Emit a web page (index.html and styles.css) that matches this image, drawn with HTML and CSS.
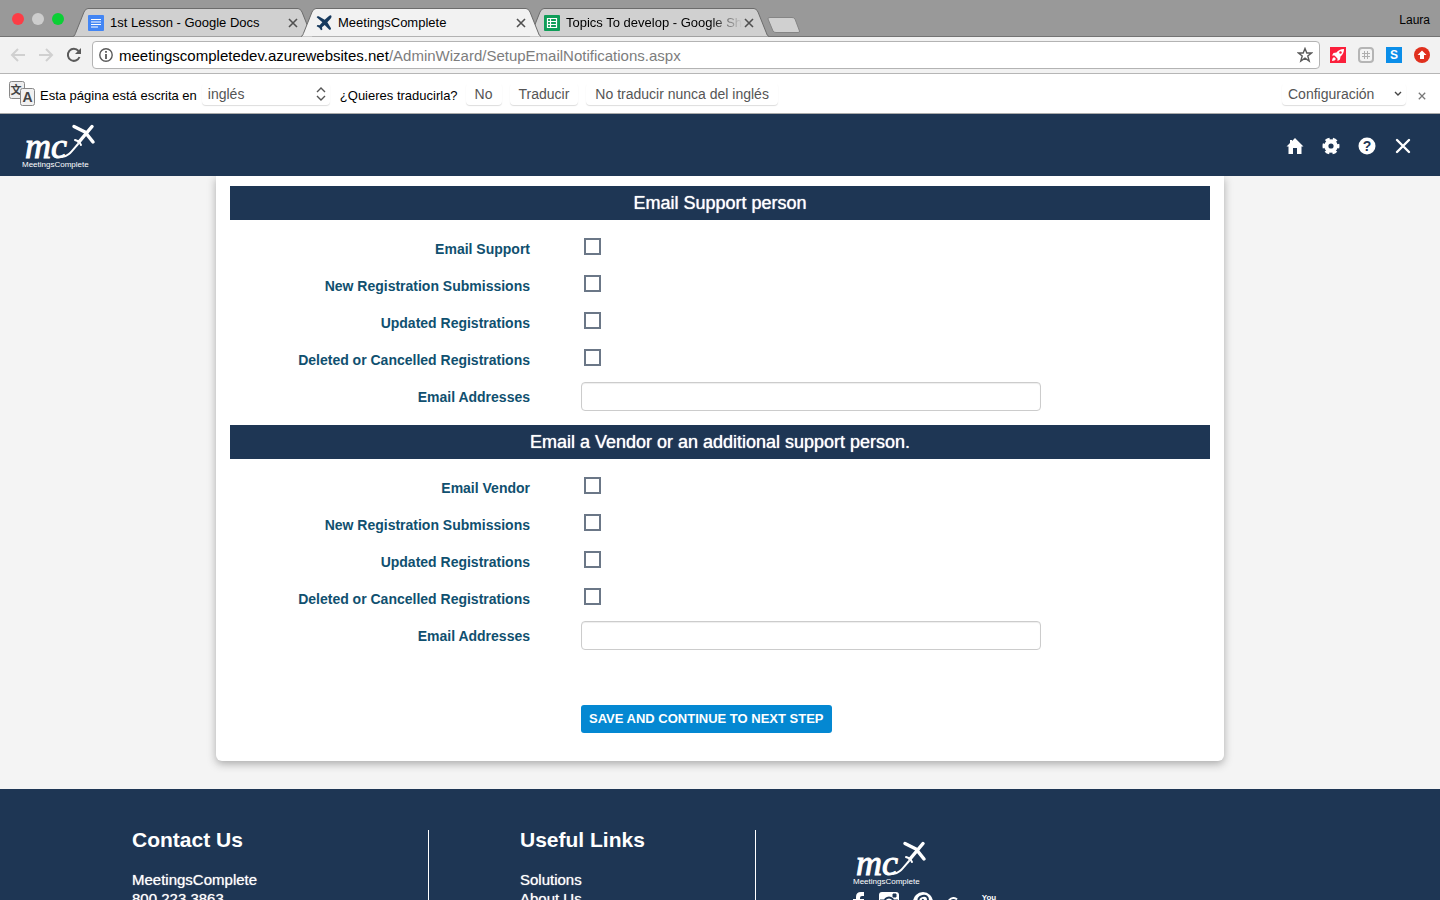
FILE: index.html
```html
<!DOCTYPE html>
<html lang="en">
<head>
<meta charset="utf-8">
<title>MeetingsComplete</title>
<link rel="stylesheet" href="styles.css">
</head>
<body>
<svg class="defs" aria-hidden="true">
  <symbol id="plane" viewBox="0 0 24 24"><path d="M1 3.500Q1.500 1 4 2L13 7 19 2Q22-1 23 1T21.500 6L17 11 22.500 20Q22.500 23 20 22L13 15 9 18.500 9.500 22 7.500 23 5 19 1 17 2 15 5.500 15.500 9.500 11Z"/></symbol>
  <symbol id="logo" viewBox="0 0 74 48">
    <text x="3" y="36" class="logo-mc">mc</text>
    <path d="M40 35C46 35 50 29 56 22" fill="none" stroke="#fff" stroke-width="2" stroke-linecap="round"/>
    <path d="M70 4.500 57 20" stroke="#fff" stroke-width="3.500" stroke-linecap="round"/>
    <path d="M52 4.500 63 10 71 20" fill="none" stroke="#fff" stroke-width="3.500" stroke-linecap="round" stroke-linejoin="round"/>
    <path d="M53 18 57 19.500 59 23" fill="none" stroke="#fff" stroke-width="2" stroke-linecap="round"/>
    <text x="0" y="45" class="logo-name">MeetingsComplete</text>
  </symbol>
  <symbol id="tabshape" viewBox="0 0 240 29" preserveAspectRatio="none"><path d="M0 28.500C2 28 2 26 3 24L11 4Q12.500.5 15 .5H225Q227.500.5 229 4L237 24Q238 28 240 28.500"/></symbol>
  <symbol id="cross" viewBox="0 0 10 10"><path d="M1 1 9 9M9 1 1 9" fill="none" stroke="currentColor" stroke-width="1.600"/></symbol>
</svg>

<header class="browser">
  <div class="tabstrip">
    <div class="lights"><span class="light red"></span><span class="light grey"></span><span class="light green"></span></div>
    <div class="tab">
      <svg class="tab-bg"><use href="#tabshape"/></svg>
      <svg class="favicon" viewBox="0 0 16 16"><rect width="16" height="16" rx="1" fill="#4285f4"/><path d="M3 4.500H13M3 7H13M3 9.500H13M3 12H10" stroke="#fff" stroke-width="1.200"/></svg>
      <span class="tab-title">1st Lesson - Google Docs</span>
      <button class="tab-close" aria-label="Close tab"><svg width="10" height="10"><use href="#cross"/></svg></button>
    </div>
    <div class="tab active">
      <svg class="tab-bg"><use href="#tabshape"/></svg>
      <svg class="favicon" fill="#173a5e"><use href="#plane"/></svg>
      <span class="tab-title">MeetingsComplete</span>
      <button class="tab-close" aria-label="Close tab"><svg width="10" height="10"><use href="#cross"/></svg></button>
    </div>
    <div class="tab last">
      <svg class="tab-bg"><use href="#tabshape"/></svg>
      <svg class="favicon" viewBox="0 0 16 16"><rect width="16" height="16" rx="1" fill="#0f9d58"/><path d="M3.500 3.500H12.500V12.500H3.500ZM3.500 6.500H12.500M3.500 9.500H12.500M6.500 3.500V12.500" fill="none" stroke="#fff" stroke-width="1.200"/></svg>
      <span class="tab-title fade">Topics To develop - Google Sheets</span>
      <button class="tab-close" aria-label="Close tab"><svg width="10" height="10"><use href="#cross"/></svg></button>
    </div>
    <button class="newtab" aria-label="New tab"><svg width="34" height="16" viewBox="0 0 34 16"><path d="M1 2Q.5.5 3 .5H25Q27 .5 28 2L32.500 14Q33 15.500 31 15.500H9Q6.500 15.500 6 14Z" fill="#d0d0d0" stroke="#858585"/></svg></button>
    <span class="profile">Laura</span>
  </div>

  <div class="toolbar">
    <button class="tool" aria-label="Back"><svg width="16" height="16" viewBox="0 0 16 16"><path d="M15 8H2M8 2 2 8 8 14" fill="none" stroke="#d0d0d0" stroke-width="2"/></svg></button>
    <button class="tool" aria-label="Forward"><svg width="16" height="16" viewBox="0 0 16 16"><path d="M1 8H14M8 2 14 8 8 14" fill="none" stroke="#d0d0d0" stroke-width="2"/></svg></button>
    <button class="tool" aria-label="Reload"><svg width="16" height="16" viewBox="0 0 16 16"><path d="M13.500 10A6 6 0 1 1 12.500 4" fill="none" stroke="#5a5a5a" stroke-width="2"/><path d="M15 1V7H9Z" fill="#5a5a5a"/></svg></button>
    <div class="address">
      <svg width="14" height="14" viewBox="0 0 14 14"><circle cx="7" cy="7" r="6.200" fill="none" stroke="#5a5a5a" stroke-width="1.400"/><path d="M7 6V11M7 3V4.800" stroke="#5a5a5a" stroke-width="1.800"/></svg>
      <span class="url">meetingscompletedev.azurewebsites.net<span class="path">/AdminWizard/SetupEmailNotifications.aspx</span></span>
      <svg width="16" height="16" viewBox="0 0 16 16"><path d="M8 1.500 9.800 6H14.500L10.800 9 12.200 14 8 11.200 3.800 14 5.200 9 1.500 6H6.200Z" fill="none" stroke="#5a5a5a" stroke-width="1.400"/></svg>
    </div>
    <div class="extensions">
      <svg width="16" height="16" viewBox="0 0 16 16"><rect width="16" height="16" fill="#fb1f3b"/><path d="M14 2Q9 2 6.500 5.500L3.500 6 2 8.500 4.500 8.500 7.500 11.500 7.500 14 10 12.500 10.500 9.500Q14 7 14 2ZM4 10Q2 11 2 14 5 14 6 12Z" fill="#fff"/><circle cx="10.500" cy="5.500" r="1.200" fill="#fb1f3b"/></svg>
      <svg width="16" height="16" viewBox="0 0 16 16"><rect x="1" y="1" width="14" height="14" rx="3" fill="#f4f4f4" stroke="#b5b5b5" stroke-width="2"/><path d="M6.500 4V12M9.500 4V12M4 6.500H12M4 9.500H12" stroke="#b0b0b0"/></svg>
      <svg width="16" height="16" viewBox="0 0 16 16"><rect width="16" height="16" fill="#0b8ee9"/><text x="8" y="12" class="ext-s">S</text></svg>
      <svg width="16" height="16" viewBox="0 0 16 16"><circle cx="8" cy="8" r="8" fill="#e0301e"/><path d="M8 3.500 12.500 8H10V12H6V8H3.500Z" fill="#fff"/></svg>
    </div>
  </div>

  <div class="infobar">
    <svg width="28" height="28" viewBox="0 0 28 28"><rect x="1.500" y="1.500" width="15" height="17" rx="2" fill="#eee" stroke="#888"/><text x="8" y="14" class="tr-cjk">文</text><rect x="12.500" y="8.500" width="14" height="17" rx="2" fill="#f1f1f1" stroke="#888"/><text x="19.500" y="22" class="tr-a">A</text></svg>
    <label class="info-text" for="lang">Esta página está escrita en</label>
    <span class="pick lang"><select id="lang"><option>inglés</option></select><svg width="10" height="14" viewBox="0 0 10 14"><path d="M1 5 5 1 9 5M1 9 5 13 9 9" fill="none" stroke="#555" stroke-width="1.400"/></svg></span>
    <span class="info-text ask">¿Quieres traducirla?</span>
    <button class="soft">No</button>
    <button class="soft">Traducir</button>
    <button class="soft">No traducir nunca del inglés</button>
    <span class="pick config"><select aria-label="Configuración"><option>Configuración</option></select><svg width="8" height="6" viewBox="0 0 8 6"><path d="M1 1 4 4 7 1" fill="none" stroke="#444" stroke-width="1.400"/></svg></span>
    <button class="dismiss" aria-label="Close"><svg width="8" height="8"><use href="#cross"/></svg></button>
  </div>
</header>

<nav class="site-nav">
  <a href="#" aria-label="MeetingsComplete"><svg class="logo"><use href="#logo"/></svg></a>
  <div class="nav-icons">
    <a href="#" aria-label="Home"><svg width="18" height="18" viewBox="0 0 18 18"><path d="M9 1 17.500 9.500H15.500V17H11V11H7V17H2.500V9.500H.5L4 6V3H6V4Z" fill="#fff"/></svg></a>
    <a href="#" aria-label="Settings"><svg width="18" height="18" viewBox="0 0 18 18"><circle cx="9" cy="9" r="4.700" fill="none" stroke="#fff" stroke-width="4.200"/><circle cx="9" cy="9" r="7" fill="none" stroke="#fff" stroke-width="3" stroke-dasharray="4.300 3.030" stroke-dashoffset="2.150"/></svg></a>
    <a href="#" aria-label="Help"><svg width="18" height="18" viewBox="0 0 18 18"><circle cx="9" cy="9" r="8.500" fill="#fff"/><text x="9" y="14" class="help-mark">?</text></svg></a>
    <a href="#" aria-label="Close"><svg width="18" height="18" viewBox="0 0 18 18"><path d="M3 3 15 15M15 3 3 15" stroke="#fff" stroke-width="2.400" stroke-linecap="round"/></svg></a>
  </div>
</nav>

<main class="page">
  <form class="card">
    <h2>Email Support person</h2>
    <div class="rows">
      <div class="row"><label for="s1">Email Support</label><input type="checkbox" id="s1"></div>
      <div class="row"><label for="s2">New Registration Submissions</label><input type="checkbox" id="s2"></div>
      <div class="row"><label for="s3">Updated Registrations</label><input type="checkbox" id="s3"></div>
      <div class="row"><label for="s4">Deleted or Cancelled Registrations</label><input type="checkbox" id="s4"></div>
      <div class="row"><label for="s5">Email Addresses</label><input type="text" id="s5"></div>
    </div>
    <h2>Email a Vendor or an additional support person.</h2>
    <div class="rows">
      <div class="row"><label for="v1">Email Vendor</label><input type="checkbox" id="v1"></div>
      <div class="row"><label for="v2">New Registration Submissions</label><input type="checkbox" id="v2"></div>
      <div class="row"><label for="v3">Updated Registrations</label><input type="checkbox" id="v3"></div>
      <div class="row"><label for="v4">Deleted or Cancelled Registrations</label><input type="checkbox" id="v4"></div>
      <div class="row"><label for="v5">Email Addresses</label><input type="text" id="v5"></div>
    </div>
    <div class="row actions"><button class="save" type="button">SAVE AND CONTINUE TO NEXT STEP</button></div>
  </form>
</main>

<footer class="site-footer">
  <section><h3>Contact Us</h3><p>MeetingsComplete<br>800.223.3863</p></section>
  <section><h3>Useful Links</h3><ul><li><a href="#">Solutions</a></li><li><a href="#">About Us</a></li></ul></section>
  <section>
    <svg class="logo"><use href="#logo"/></svg>
    <div class="social">
      <a href="#" aria-label="Facebook"><svg width="12" height="22" viewBox="0 0 12 22"><path d="M3 22V11H0V7H3V5Q3 0 8 0H11V4H9Q7 4 7 6V7H11V11H7V22Z" fill="#fff"/></svg></a>
      <a href="#" aria-label="Instagram"><svg width="20" height="20" viewBox="0 0 20 20"><rect width="20" height="20" rx="3" fill="#fff"/><circle cx="10" cy="10" r="4.500" fill="none" stroke="#1e3654" stroke-width="2"/><path d="M14 2H17V5H14ZM1 8H5M15 8H19" fill="#1e3654" stroke="#1e3654" stroke-width="1"/></svg></a>
      <a href="#" aria-label="Pinterest"><svg width="20" height="20" viewBox="0 0 20 20"><circle cx="10" cy="10" r="10" fill="#fff"/><path d="M6 11Q4 5 9.500 4T15 8 12 12 9 10M10 7 8 17" fill="none" stroke="#1e3654" stroke-width="2"/></svg></a>
      <a href="#" aria-label="Google Plus" class="gplus"><svg width="20" height="16" viewBox="0 0 20 16"><path d="M10 2.500A5 5 0 1 0 11 8H7M15 8H19" fill="none" stroke="#fff" stroke-width="2"/></svg></a>
      <a href="#" aria-label="YouTube"><svg width="16" height="22" viewBox="0 0 16 22"><text x="8" y="8" class="you">You</text><rect y="10" width="16" height="12" rx="3" fill="#fff"/></svg></a>
    </div>
  </section>
</footer>
</body>
</html>
```
FILE: styles.css
```css
* { box-sizing: border-box; }
body { margin: 0; height: 100vh; overflow: hidden; display: flex; flex-direction: column; background: #f4f4f4; font-family: "Liberation Sans", Arial, sans-serif; font-size: 14px; color: #000; }
button { border: 0; padding: 0; background: none; font: inherit; color: inherit; }
a { color: inherit; text-decoration: none; }
svg { flex: none; display: block; }
.defs { display: none; }
.browser, .site-nav, .page { flex: none; }

.tabstrip { display: flex; align-items: flex-end; height: 37px; padding: 0 10px 0 12px; background: #999; box-shadow: inset 0 -1px #737373; }
.lights { display: flex; gap: 8px; width: 61px; padding-bottom: 12px; }
.light { width: 12px; height: 12px; border-radius: 50%; }
.red { background: #fc3d46; }
.grey { background: #cdcdcd; }
.green { background: #0bcf35; }
.tab { position: relative; display: flex; align-items: center; width: 240px; height: 29px; padding: 0 15px; margin-right: -12px; font-size: 13px; }
.tab.active { z-index: 1; }
.tab-bg { position: absolute; inset: 0; width: 100%; height: 100%; fill: #d0d0d0; stroke: #6c6c6c; }
.active .tab-bg { fill: #f2f2f2; }
.favicon { position: relative; width: 16px; height: 16px; }
.tab-title { position: relative; flex: 1; margin-left: 6px; overflow: hidden; white-space: nowrap; }
.fade { -webkit-mask-image: linear-gradient(90deg, #000 82%, transparent); mask-image: linear-gradient(90deg, #000 82%, transparent); }
.tab-close { position: relative; padding-left: 2px; color: #505050; }
.newtab { margin: 0 0 4px 10px; }
.profile { margin: 0 0 10px auto; font-size: 12px; }

.toolbar { display: flex; align-items: center; height: 37px; padding: 0 10px; background: #f2f2f2; border-bottom: 1px solid #b6b6b6; }
.tool { margin-right: 12px; }
.address { flex: 1; display: flex; align-items: center; height: 28px; margin-left: -2px; padding: 0 6px; gap: 6px; background: #fff; border: 1px solid #b3b3b3; border-radius: 4px; }
.url { flex: 1; font-size: 15px; }
.path { color: #7d7d7d; }
.extensions { display: flex; gap: 12px; margin-left: 10px; }
.ext-s { font: bold 12px "Liberation Sans", sans-serif; fill: #fff; text-anchor: middle; }

.infobar { display: flex; align-items: center; height: 40px; padding: 0 14px 0 8px; background: #fff; border-bottom: 1px solid #aaa; color: #555; }
.tr-cjk { font: bold 11px "Noto Sans CJK SC", sans-serif; fill: #444; text-anchor: middle; }
.tr-a { font: bold 14px "Liberation Sans", sans-serif; fill: #444; text-anchor: middle; }
.info-text { margin: 4px 5px 0 4px; font-size: 13px; color: #000; white-space: nowrap; }
.ask { margin-left: 10px; margin-right: 8px; }
.pick, .soft { height: 22px; border-radius: 4px; box-shadow: 0 1px 1px #ddd; }
.pick { display: flex; align-items: center; padding: 0 4px 0 6px; }
.pick select { flex: 1; appearance: none; border: 0; padding: 0; background: none; font: inherit; color: inherit; }
.lang { width: 128px; }
.soft { padding: 0 9px; margin-right: 8px; white-space: nowrap; }
.config { width: 124px; margin-left: auto; }
.dismiss { margin-left: 12px; color: #777; padding-top: 4px; }

.site-nav { display: flex; align-items: center; justify-content: space-between; height: 62px; padding: 2px 28px 0 22px; background: #1e3654; }
.logo { width: 74px; height: 48px; }
.logo-mc { font: italic 36px "Liberation Serif", serif; fill: #fff; stroke: #fff; stroke-width: 1px; }
.logo-name { font: 8px "Liberation Sans", sans-serif; fill: #fff; }
.nav-icons { display: flex; gap: 18px; }
.help-mark { font: bold 14px "Liberation Sans", sans-serif; fill: #1e3654; text-anchor: middle; }

.page { padding: 0 16px 28px; }
.card { max-width: 1008px; margin: 0 auto; padding: 10px 14px 28px; background: #fff; border-radius: 0 0 6px 6px; box-shadow: 0 3px 8px #aaa; clip-path: inset(0 -12px -12px); }
.card h2 { margin: 0; font-size: 18px; font-weight: normal; line-height: 34px; text-align: center; color: #fff; background: #1e3654; text-shadow: 0 0 1px #fff; }
.rows { padding: 10px 0; }
.row { display: grid; grid-template-columns: 300px minmax(0, 460px); column-gap: 51px; align-items: center; min-height: 37px; }
.row label { font-weight: bold; text-align: right; color: #10506f; padding-top: 1px; }
.row input { margin: 0; appearance: none; background: #fff; }
.row input[type="checkbox"] { width: 17px; height: 17px; margin: 0 0 4px 3px; border: 2px solid #6b7787; }
.row input[type="text"] { width: 100%; height: 29px; padding: 0 8px; border: 1px solid #ccc; border-radius: 4px; box-shadow: inset 0 1px 1px #eee; font: inherit; }
.actions { padding-top: 41px; min-height: 0; }
.save { grid-column: 2; justify-self: start; height: 28px; padding: 0 8px 2px; border-radius: 3px; background: #0488d2; color: #fff; font-size: 13px; font-weight: bold; }

.site-footer { flex: 1; min-height: 0; overflow: hidden; display: grid; grid-template-columns: 297px 327px 1fr; padding: 41px 132px 0; background: #1e3654; color: #fff; font-size: 15px; line-height: 19px; }
.site-footer section + section { padding-left: 91px; }
.site-footer section + section + section { padding: 9px 0 0 97px; }
.site-footer section:not(:last-child) { border-right: 1px solid #fff; }
.site-footer h3 { margin: 0 0 20px; font-size: 21px; line-height: 20px; }
.site-footer p, .site-footer ul { margin: 0; padding: 0; list-style: none; text-shadow: 0 0 1px #ccc; }
.social { display: flex; gap: 14px; margin-top: 5px; }
.gplus { padding-top: 5px; }
.you { font: bold 8px "Liberation Sans Narrow", "Liberation Sans", sans-serif; fill: #fff; text-anchor: middle; }
```
